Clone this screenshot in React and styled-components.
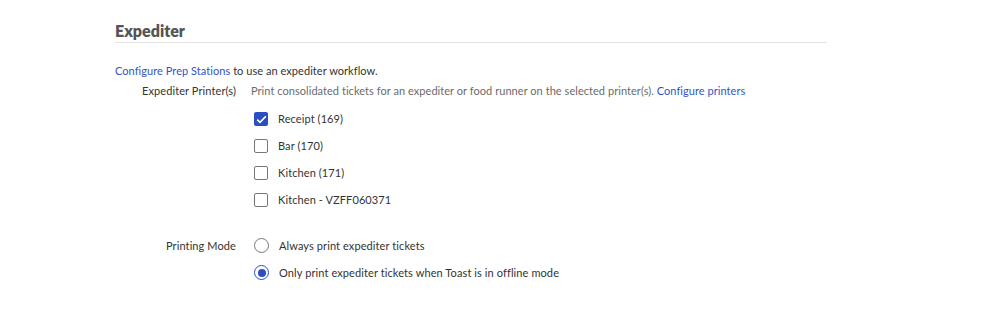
import React from 'react';
import styled, { createGlobalStyle } from 'styled-components';

const GlobalStyle = createGlobalStyle`
  body {
    margin: 0;
    background: #fff;
    font-family: 'Lato', 'Liberation Sans', sans-serif;
    color: #333;
  }
`;

const Section = styled.section`
  width: 712px;
  margin-left: 115px;
  padding-top: 20px;
`;

const Heading = styled.h2`
  margin: 0;
  font-size: 16px;
  font-weight: 800;
  color: #555;
  line-height: 22px;
  border-bottom: 1px solid #e3e3e3;
`;

const Intro = styled.p`
  margin: 20px 0 0;
  font-size: 11px;
  letter-spacing: 0.05px;
  line-height: 16px;
  color: #333;
`;

const Link = styled.a`
  color: #2f55c4;
  text-decoration: none;
  cursor: pointer;
`;

const Field = styled.div`
  display: grid;
  grid-template-columns: 121px 1fr;
  column-gap: 15px;
  margin-top: ${(p) => p.$top || 0}px;
`;

const Label = styled.div`
  text-align: right;
  font-size: 11px;
  letter-spacing: 0.1px;
  line-height: 16px;
  color: #333;
`;

const Description = styled.div`
  font-size: 11px;
  letter-spacing: 0.05px;
  line-height: 16px;
  color: #6b6b6b;
`;

const Options = styled.div`
  display: flex;
  flex-direction: column;
  gap: ${(p) => p.$gap}px;
  margin-top: ${(p) => p.$top || 0}px;
`;

const Option = styled.label`
  display: flex;
  align-items: center;
  gap: 10px;
  padding-left: 3px;
  font-size: 11px;
  letter-spacing: 0.1px;
  line-height: 14px;
  color: #333;
`;

const Box = styled.span`
  width: 14px;
  height: 14px;
  box-sizing: border-box;
  border-radius: 2px;
  border: ${(p) => (p.$checked ? 'none' : '1.5px solid #777')};
  background: ${(p) => (p.$checked ? '#2b4fc0' : '#fff')};
  display: flex;
  align-items: center;
  justify-content: center;
  flex-shrink: 0;
`;

const Radio = styled.span`
  width: 15px;
  height: 15px;
  box-sizing: border-box;
  border-radius: 50%;
  border: 1.5px solid ${(p) => (p.$checked ? '#2b4fc0' : '#777')};
  display: flex;
  align-items: center;
  justify-content: center;
  flex-shrink: 0;

  &::after {
    content: '';
    display: ${(p) => (p.$checked ? 'block' : 'none')};
    width: 8px;
    height: 8px;
    border-radius: 50%;
    background: #2b4fc0;
  }
`;

const Check = () => (
  <svg width="11" height="9" viewBox="0 0 11 9">
    <path d="M1.2 4.6 L4 7.3 L9.8 1.4" fill="none" stroke="#fff" strokeWidth="1.6" />
  </svg>
);

const printers = [
  { name: 'Receipt (169)', checked: true },
  { name: 'Bar (170)', checked: false },
  { name: 'Kitchen (171)', checked: false },
  { name: 'Kitchen - VZFF060371', checked: false },
];

const modes = [
  { name: 'Always print expediter tickets', checked: false },
  { name: 'Only print expediter tickets when Toast is in offline mode', checked: true },
];

export default function App() {
  return (
    <>
      <GlobalStyle />
      <Section>
        <Heading>Expediter</Heading>
        <Intro>
          <Link>Configure Prep Stations</Link> to use an expediter workflow.
        </Intro>
        <Field $top={4}>
          <Label>Expediter Printer(s)</Label>
          <div>
            <Description>
              Print consolidated tickets for an expediter or food runner on the selected printer(s).{' '}
              <Link>Configure printers</Link>
            </Description>
            <Options $gap={13} $top={13}>
              {printers.map((p) => (
                <Option key={p.name}>
                  <Box $checked={p.checked}>{p.checked && <Check />}</Box>
                  {p.name}
                </Option>
              ))}
            </Options>
          </div>
        </Field>
        <Field $top={31}>
          <Label>Printing Mode</Label>
          <Options $gap={12}>
            {modes.map((m) => (
              <Option key={m.name}>
                <Radio $checked={m.checked} />
                {m.name}
              </Option>
            ))}
          </Options>
        </Field>
      </Section>
    </>
  );
}
